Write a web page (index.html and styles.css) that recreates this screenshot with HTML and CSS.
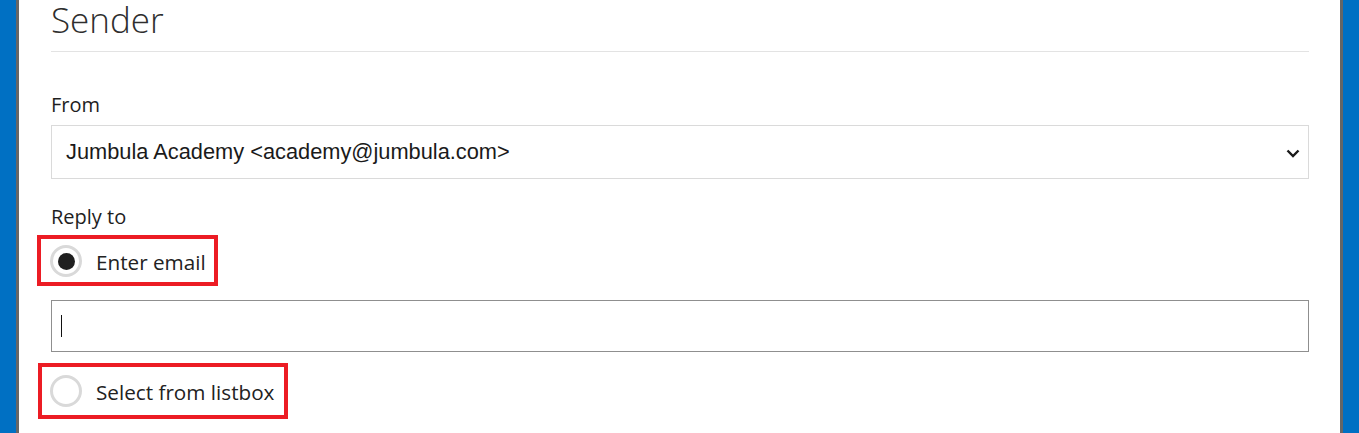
FILE: index.html
```html
<!DOCTYPE html>
<html lang="en">
<head>
<meta charset="utf-8">
<title>Sender</title>
<link rel="stylesheet" href="styles.css">
</head>
<body>
<div class="frame">
  <div class="edge"></div>
  <main class="panel">
    <h2 class="title">Sender</h2>

    <label class="field-label">From</label>
    <div class="select">
      <span class="select-text">Jumbula Academy &lt;academy@jumbula.com&gt;</span>
      <svg class="chevron" width="14" height="9" viewBox="0 0 14 9" aria-hidden="true">
        <path d="M1.5 1.5 L7 7 L12.5 1.5" fill="none" stroke="#1a1a1a" stroke-width="2.4"/>
      </svg>
    </div>

    <label class="field-label reply">Reply to</label>
    <div class="option option-a">
      <span class="radio checked"></span>
      <span class="option-text">Enter email</span>
    </div>
    <div class="textbox"><span class="caret"></span></div>
    <div class="option option-b">
      <span class="radio"></span>
      <span class="option-text">Select from listbox</span>
    </div>
  </main>
  <div class="edge"></div>
</div>
</body>
</html>
```

FILE: styles.css
```css
html, body {
  margin: 0;
  padding: 0;
  background: #ffffff;
}

.frame {
  display: flex;
  height: 433px;
  overflow: hidden;
}

.edge {
  width: 16px;
  flex: 0 0 16px;
  background: #0070c3;
}

.panel {
  flex: 1;
  display: flex;
  flex-direction: column;
  align-items: flex-start;
  border-left: 3px solid #666666;
  border-right: 3px solid #666666;
  padding: 0 31px 0 32px;
  background: #ffffff;
  font-family: "Open Sans", "Noto Sans", sans-serif;
  color: #222222;
}

.title {
  align-self: stretch;
  margin: 0;
  font-family: "Open Sans", sans-serif;
  font-weight: 300;
  font-size: 35px;
  line-height: 40px;
  color: #2e2e2e;
  padding-bottom: 11px;
  border-bottom: 1px solid #e3e3e3;
}

.field-label {
  display: block;
  margin-top: 41px;
  margin-bottom: 8px;
  font-size: 20px;
  line-height: 24px;
  color: #1e1e1e;
}

.field-label.reply {
  margin-top: 26px;
  margin-bottom: 6px;
}

.select {
  align-self: stretch;
  box-sizing: border-box;
  height: 54px;
  border: 1px solid #dadada;
  display: flex;
  align-items: center;
  justify-content: space-between;
  padding: 0 8px 0 14px;
}

.select-text {
  font-family: "Liberation Sans", Arial, sans-serif;
  font-size: 21.8px;
  color: #1a1a1a;
}

.chevron {
  display: block;
  margin-top: 2px;
}

.option {
  display: inline-flex;
  align-items: center;
  gap: 14px;
  border: 4px solid #ec1c24;
  font-size: 20.7px;
  line-height: 24px;
  color: #222222;
}

.option-text {
  padding-top: 1px;
}

.option-a {
  margin-left: -14px;
  padding: 6px 8px 5px 9px;
}

.option-b {
  margin-left: -13px;
  margin-top: 11px;
  padding: 8px 10px 8px 8px;
}

.radio {
  box-sizing: border-box;
  width: 32px;
  height: 32px;
  border: 3px solid #d9d9d9;
  border-radius: 50%;
  display: flex;
  align-items: center;
  justify-content: center;
  flex: 0 0 32px;
}

.radio.checked::after {
  content: "";
  width: 17px;
  height: 17px;
  border-radius: 50%;
  background: #1f1f1f;
}

.textbox {
  align-self: stretch;
  box-sizing: border-box;
  height: 52px;
  margin-top: 14px;
  border: 1px solid #8f8f8f;
  display: flex;
  align-items: center;
  padding-left: 9px;
}

.caret {
  display: block;
  width: 1px;
  height: 22px;
  background: #111111;
}
```
